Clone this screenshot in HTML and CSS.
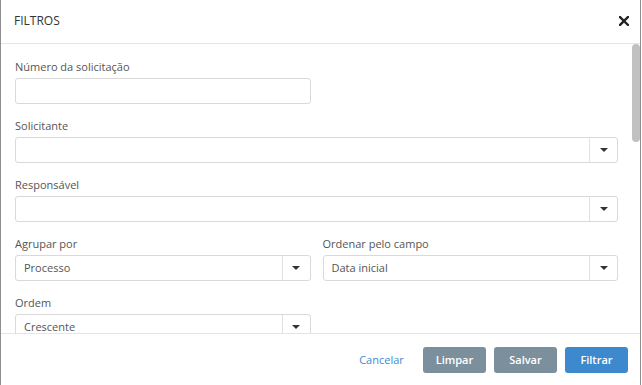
FILE: index.html
```html
<!DOCTYPE html>
<html lang="pt-BR">
<head>
    <meta charset="utf-8">
    <title>Filtros</title>
    <link rel="stylesheet" href="styles.css">
</head>
<body>
    <div class="modal">
        <div class="modal-header">
            <h2>FILTROS</h2>
            <span class="close-btn">
                <svg width="10" height="10" viewBox="0 0 10 10"><path d="M1 1L9 9M9 1L1 9" stroke="#222" stroke-width="2.4" stroke-linecap="square"/></svg>
            </span>
        </div>

        <div class="modal-body">
            <div class="form-area">
                <div class="row">
                    <div class="field">
                        <label>Número da solicitação</label>
                        <input type="text" class="text-input">
                    </div>
                    <div class="field"></div>
                </div>

                <div class="field">
                    <label>Solicitante</label>
                    <div class="select"><span class="select-value"></span><span class="select-btn"><i class="caret"></i></span></div>
                </div>

                <div class="field">
                    <label>Responsável</label>
                    <div class="select"><span class="select-value"></span><span class="select-btn"><i class="caret"></i></span></div>
                </div>

                <div class="row">
                    <div class="field">
                        <label>Agrupar por</label>
                        <div class="select"><span class="select-value">Processo</span><span class="select-btn"><i class="caret"></i></span></div>
                    </div>
                    <div class="field">
                        <label>Ordenar pelo campo</label>
                        <div class="select"><span class="select-value">Data inicial</span><span class="select-btn"><i class="caret"></i></span></div>
                    </div>
                </div>

                <div class="row">
                    <div class="field">
                        <label>Ordem</label>
                        <div class="select"><span class="select-value">Crescente</span><span class="select-btn"><i class="caret"></i></span></div>
                    </div>
                    <div class="field"></div>
                </div>
            </div>

            <!-- scrollbar drawn by hand, the headless browser hides the native one -->
            <div class="scroll-track">
                <div class="scroll-thumb"></div>
            </div>
        </div>

        <div class="modal-footer">
            <button class="btn btn-link">Cancelar</button>
            <button class="btn btn-gray">Limpar</button>
            <button class="btn btn-gray">Salvar</button>
            <button class="btn btn-blue">Filtrar</button>
        </div>
    </div>
</body>
</html>
```

FILE: styles.css
```css
* {
    box-sizing: border-box;
}

body {
    margin: 0;
    background: #fff;
    font-family: "Open Sans", "Liberation Sans", sans-serif;
    font-size: 11px;
    color: #555;
}

.modal {
    width: 641px;
    height: 385px;
    border-left: 1px solid #8e8e8e;
    border-right: 1px solid #8e8e8e;
    background: #fff;
    display: flex;
    flex-direction: column;
}

.modal-header {
    height: 44px;
    flex-shrink: 0;
    display: flex;
    align-items: center;
    justify-content: space-between;
    padding: 0 13px 2px 13px;
    border-bottom: 1px solid #e5e5e5;
}

.modal-header h2 {
    margin: 0;
    font-size: 12px;
    font-weight: 400;
    color: #333;
}

.close-btn {
    display: flex;
    margin-right: -2px;
}

.modal-body {
    flex: 1;
    display: flex;
    overflow: hidden;
}

.form-area {
    flex: 1;
    padding: 14px 14px 0 14px;
}

.scroll-track {
    width: 8px;
    flex-shrink: 0;
}

.scroll-thumb {
    height: 98px;
    background: #c1c1c1;
    border-radius: 4px;
}

.row {
    display: grid;
    grid-template-columns: 1fr 1fr;
    gap: 12px;
}

.field {
    margin-bottom: 13px;
}

.field label {
    display: block;
    line-height: 17px;
    margin-bottom: 3px;
}

.text-input {
    display: block;
    width: 100%;
    height: 26px;
    border: 1px solid #d9d9d9;
    border-radius: 3px;
    font: inherit;
    padding: 0 8px;
}

.select {
    display: flex;
    height: 26px;
    border: 1px solid #d9d9d9;
    border-radius: 3px;
}

.select-value {
    flex: 1;
    padding: 0 8px;
    line-height: 24px;
    color: #555;
}

.select-btn {
    width: 28px;
    border-left: 1px solid #e2e2e2;
    display: flex;
    align-items: center;
    justify-content: center;
}

.caret {
    width: 0;
    height: 0;
    border-left: 4px solid transparent;
    border-right: 4px solid transparent;
    border-top: 4px solid #333;
}

.modal-footer {
    height: 52px;
    flex-shrink: 0;
    border-top: 1px solid #e5e5e5;
    display: flex;
    justify-content: flex-end;
    align-items: center;
    gap: 8px;
    padding: 0 12px 0 0;
}

.btn {
    height: 26px;
    width: 63px;
    border: none;
    border-radius: 3px;
    font-family: inherit;
    font-size: 11px;
    font-weight: 600;
    color: #fff;
    cursor: pointer;
}

.btn-link {
    background: none;
    color: #3d8bcf;
    font-weight: 400;
    margin-right: 2px;
}

.btn-gray {
    background: #7b909c;
}

.btn-blue {
    background: #3c89cd;
}
```
